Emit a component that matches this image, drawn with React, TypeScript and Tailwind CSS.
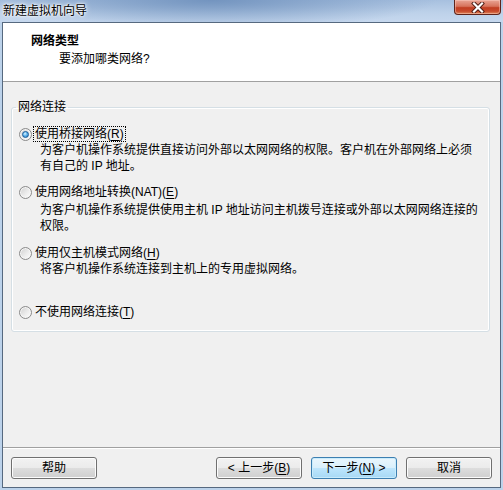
import React from "react";

function Radio({ checked }: { checked?: boolean }) {
  return (
    <span className="flex h-[13px] w-[13px] shrink-0 items-center justify-center rounded-full border border-[#8a8a8a] bg-[linear-gradient(135deg,#cfcfcf_0%,#ececec_55%,#ffffff_100%)] shadow-[inset_0_0_0_1px_#f6f6f6]">
      {checked && (
        <span className="h-[7px] w-[7px] rounded-full border border-[#175a98] bg-[radial-gradient(circle_at_40%_35%,#e2f5ff_0%,#6bbcf0_40%,#1f74bf_100%)]" />
      )}
    </span>
  );
}

function Btn({ children, primary }: { children: React.ReactNode; primary?: boolean }) {
  return (
    <button
      className={
        primary
          ? "flex h-[22px] w-[86px] items-center justify-center rounded-[3px] border border-[#3c7fb1] bg-[linear-gradient(180deg,#eaf6fd_0%,#d9f0fc_50%,#bee6fd_50%,#a7d9f5_100%)] text-[12px] leading-4 text-black shadow-[inset_0_0_0_1px_#c9ecfc]"
          : "flex h-[22px] w-[86px] items-center justify-center rounded-[3px] border border-[#707070] bg-[linear-gradient(180deg,#f2f2f2_0%,#ebebeb_50%,#dddddd_50%,#cfcfcf_100%)] text-[12px] leading-4 text-black shadow-[inset_0_0_0_1px_#fcfcfc]"
      }
    >
      {children}
    </button>
  );
}

function U({ children }: { children: React.ReactNode }) {
  return <span className="underline underline-offset-2">{children}</span>;
}

export default function App() {
  return (
    <div className="flex h-[490px] w-[503px] flex-col bg-[#bcd2ea] px-[2px] pb-[2px] font-['Liberation_Sans','Noto_Sans_CJK_SC',sans-serif] text-[12px] leading-4 text-black">
      {/* title bar */}
      <div className="-mx-[2px] flex h-[22px] shrink-0 items-start bg-[radial-gradient(ellipse_45%_130%_at_42%_0%,#7394bf_0%,rgba(115,148,191,0)_100%),linear-gradient(180deg,#a7c0df_0%,#bed2ea_60%,#c6d8ee_100%)]">
        <span className="pl-[3px] pt-[3px] text-[12px] leading-4 [text-shadow:0_0_6px_#fff,0_0_3px_#fff,0_0_2px_#fff]">
          新建虚拟机向导
        </span>
        <div className="ml-auto mr-[2px] flex h-[15px] w-[47px] items-center justify-center rounded-b-[4px] border border-t-0 border-[#5e231a] bg-[linear-gradient(180deg,#e9a595_0%,#d7735c_45%,#c13e22_55%,#c84a2c_80%,#de8a5c_100%)] shadow-[inset_0_0_0_1px_rgba(255,210,200,0.45)]">
          <svg width="14" height="11" viewBox="0 0 14 11">
            <path d="M3 1.5 L11 9.5 M11 1.5 L3 9.5" stroke="#4a1a12" strokeWidth="4" strokeLinecap="square" />
            <path d="M3 1.5 L11 9.5 M11 1.5 L3 9.5" stroke="#ffffff" strokeWidth="2.2" strokeLinecap="square" />
          </svg>
        </div>
      </div>

      {/* client */}
      <div className="flex flex-1 flex-col border border-[#56697f] bg-[#f0f0f0]">
        {/* header */}
        <div className="h-[59px] shrink-0 border-b border-[#a0a0a0] bg-white pl-[28px] pt-[10px]">
          <div className="font-bold">网络类型</div>
          <div className="mt-[2px] pl-[28px]">要添加哪类网络?</div>
        </div>

        {/* body */}
        <div className="flex flex-1 flex-col">
          <fieldset className="ml-2 mr-[10px] mt-[17px] rounded-[3px] border border-[#d5dfe5] pb-[11px] pl-[7px] pt-[11px] shadow-[inset_0_0_0_1px_#ffffff]">
            <legend className="-ml-[3px] px-[2px] leading-4">网络连接</legend>

            <div className="flex h-4 items-center">
              <Radio checked />
              <span className="ml-[1px] border border-dotted border-black px-[1px] leading-[14px]">
                使用桥接网络(<U>R</U>)
              </span>
            </div>
            <div className="whitespace-nowrap pl-[21px]">
              为客户机操作系统提供直接访问外部以太网网络的权限。客户机在外部网络上必须
            </div>
            <div className="whitespace-nowrap pl-[21px]">有自己的 IP 地址。</div>

            <div className="mt-[10px] flex h-4 items-center">
              <Radio />
              <span className="ml-[3px]">
                使用网络地址转换(NAT)(<U>E</U>)
              </span>
            </div>
            <div className="mt-[2px] whitespace-nowrap pl-[21px]">
              为客户机操作系统提供使用主机 IP 地址访问主机拨号连接或外部以太网网络连接的
            </div>
            <div className="whitespace-nowrap pl-[21px]">权限。</div>

            <div className="mt-[11px] flex h-4 items-center">
              <Radio />
              <span className="ml-[3px]">
                使用仅主机模式网络(<U>H</U>)
              </span>
            </div>
            <div className="whitespace-nowrap pl-[21px]">将客户机操作系统连接到主机上的专用虚拟网络。</div>

            <div className="mt-[27px] flex h-4 items-center">
              <Radio />
              <span className="ml-[3px]">
                不使用网络连接(<U>T</U>)
              </span>
            </div>
          </fieldset>
        </div>

        {/* footer */}
        <div className="flex shrink-0 items-center border-t border-[#a0a0a0] px-2 pb-[8px] pt-[9px] shadow-[inset_0_1px_0_#ffffff]">
          <Btn>帮助</Btn>
          <div className="ml-auto flex gap-[9px]">
            <Btn>
              &lt; 上一步(<U>B</U>)
            </Btn>
            <Btn primary>
              下一步(<U>N</U>) &gt;
            </Btn>
            <Btn>取消</Btn>
          </div>
        </div>
      </div>
    </div>
  );
}
